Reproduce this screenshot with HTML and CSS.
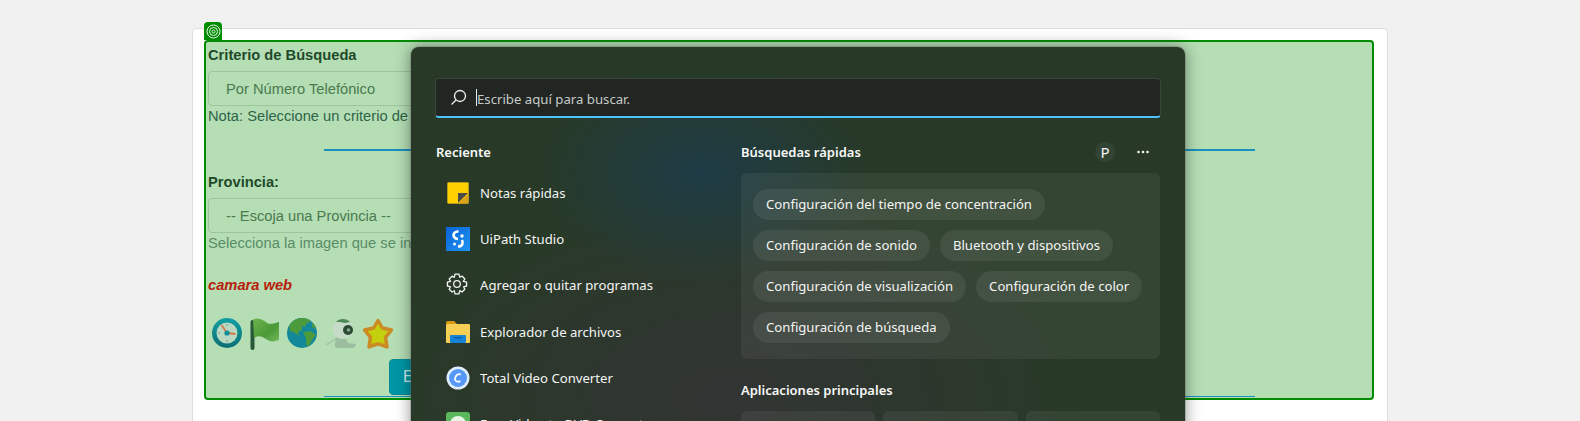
FILE: index.html
```html
<!DOCTYPE html>
<html lang="es">
<head>
    <meta charset="UTF-8">
    <title>Buscar</title>
    <link rel="stylesheet" href="styles.css">
</head>
<body>
    <div class="card">
        <div class="form-box">
            <div class="handle">
                <svg width="15" height="15" viewBox="0 0 15 15" fill="none" stroke="#e8f4e8">
                    <circle cx="7.5" cy="7.5" r="6.5"/>
                    <circle cx="7.5" cy="7.5" r="4"/>
                    <circle cx="7.5" cy="7.5" r="1.5"/>
                </svg>
            </div>
            <label class="label">Criterio de Búsqueda</label>
            <div class="select">Por Número Telefónico</div>
            <p class="note">Nota: Seleccione un criterio de búsqueda</p>
            <hr class="line">
            <label class="label province">Provincia:</label>
            <div class="select">-- Escoja una Provincia --</div>
            <p class="note faded">Selecciona la imagen que se indica</p>
            <p class="captcha">camara web</p>
            <div class="captcha-icons">
                <!-- clock -->
                <svg width="30" height="30" viewBox="0 0 30 30">
                    <defs>
                        <linearGradient id="ring" x1="0" y1="0" x2="0" y2="1">
                            <stop offset="0" stop-color="#12a0a4"/>
                            <stop offset="1" stop-color="#0b6e72"/>
                        </linearGradient>
                    </defs>
                    <circle cx="15" cy="15" r="15" fill="url(#ring)"/>
                    <circle cx="15" cy="15" r="10.5" fill="#b8d8c2"/>
                    <path d="M15 15 L9.5 7" stroke="#d07a48" stroke-width="1.8"/>
                    <path d="M15 15 L23.5 16" stroke="#d07a48" stroke-width="1.8"/>
                    <circle cx="15" cy="15" r="2.6" fill="#0f8f98"/>
                    <circle cx="15" cy="7" r="0.8" fill="#6a9a88"/>
                    <circle cx="15" cy="23" r="0.8" fill="#6a9a88"/>
                    <circle cx="7" cy="15" r="0.8" fill="#6a9a88"/>
                </svg>
                <!-- flag -->
                <svg width="29" height="32" viewBox="0 0 29 32">
                    <defs>
                        <linearGradient id="cloth" x1="0" y1="0" x2="1" y2="1">
                            <stop offset="0" stop-color="#6cb24a"/>
                            <stop offset="0.6" stop-color="#4a9a38"/>
                            <stop offset="1" stop-color="#74b85a"/>
                        </linearGradient>
                    </defs>
                    <rect x="0.5" y="2" width="4" height="30" rx="2" fill="#28573a"/>
                    <path d="M3 1.5 C9 -1 13 2 17 5 C21 7 25 5 29 4 V22 C24 24 20 24 16 21 C12 18 8 17 4 20 Z" fill="url(#cloth)"/>
                </svg>
                <!-- globe -->
                <svg width="30" height="30" viewBox="0 0 30 30">
                    <defs>
                        <clipPath id="earth"><circle cx="15" cy="15" r="15"/></clipPath>
                    </defs>
                    <circle cx="15" cy="15" r="15" fill="#12889a"/>
                    <g clip-path="url(#earth)" fill="#4c9a3e">
                        <path d="M2 8 C5 1 14 -2 22 1 L24 3 L19 6 L18 9 L15 8 L15 12 L11 14 L12 18 L8 15 L3 13 Z"/>
                        <path d="M16 14 L24 13 L29 17 L25 22 L22 28 L19 27 L19 20 Z"/>
                        <path d="M25 5 L29 8 L28 11 L25 9 Z"/>
                    </g>
                </svg>
                <!-- webcam -->
                <svg width="31" height="31" viewBox="0 0 31 31">
                    <path d="M12 20 L1 27" stroke="#a6c8aa" stroke-width="1.6" stroke-linecap="round"/>
                    <path d="M11 20 L21 21 L23 25 L31 26 Q31 30 26 30 H13 Q9 30 10 26 Z" fill="#9cbea0"/>
                    <circle cx="17.5" cy="11" r="10" fill="#c6dcc8"/>
                    <path d="M11 4 C14 0 22 0 25 4 L20 5 L15 4 Z" fill="#4c8a56"/>
                    <circle cx="23" cy="12" r="5" fill="#2a4a32"/>
                    <circle cx="23.5" cy="12" r="1.8" fill="#86ac8e"/>
                </svg>
                <!-- star -->
                <svg width="32" height="32" viewBox="0 0 32 32">
                    <defs>
                        <radialGradient id="starfill" cx="0.5" cy="0.42" r="0.6">
                            <stop offset="0.7" stop-color="#c4cf0e"/>
                            <stop offset="1" stop-color="#d29a1c"/>
                        </radialGradient>
                    </defs>
                    <path d="M16 2.5 L20.4 10 L29.5 12 L23.6 19.4 L25 29 L16 25.8 L7 29 L8.4 19.4 L2.5 12 L11.6 10 Z" fill="url(#starfill)" stroke="#cb8a22" stroke-width="3.4" stroke-linejoin="round"/>
                </svg>
            </div>
            <div class="actions"><button class="submit">Enviar</button></div>
            <hr class="line thin">
        </div>
    </div>

    <div class="search-panel">
        <div class="search-box">
            <svg width="17" height="17" viewBox="0 0 17 17" fill="none" stroke="#f2f2f2" stroke-width="1.3">
                <circle cx="10" cy="7" r="5.5"/>
                <path d="M6 11 L1.5 15.5"/>
            </svg>
            <span class="caret"></span>
            <span class="placeholder">Escribe aquí para buscar.</span>
        </div>
        <div class="columns">
            <div class="recent">
                <h3 class="heading">Reciente</h3>
                <ul class="app-list">
                    <li class="app">
                        <svg width="24" height="24" viewBox="0 0 24 24">
                            <rect x="1.5" y="1.5" width="21" height="21" rx="1" fill="#ffd000" stroke="#b89a20"/>
                            <path d="M12 22 V12 H22 Z" fill="#4a4a46"/>
                            <path d="M13 22 L22 13 V22 Z" fill="#d9a21a"/>
                        </svg>
                        Notas rápidas
                    </li>
                    <li class="app">
                        <svg width="24" height="24" viewBox="0 0 24 24">
                            <defs>
                                <linearGradient id="uipath" x1="0" y1="0" x2="1" y2="1">
                                    <stop offset="0" stop-color="#0a62d8"/>
                                    <stop offset="1" stop-color="#1e96f0"/>
                                </linearGradient>
                            </defs>
                            <rect width="24" height="24" fill="url(#uipath)"/>
                            <path d="M12.5 4.5 C8 4 6.5 8 8.5 10.5 C9.5 11.5 11 12 12 12" fill="none" stroke="#fff" stroke-width="2.6"/>
                            <path d="M16 13 C17.5 16 16.5 19.5 12 19.5" fill="none" stroke="#fff" stroke-width="2.6"/>
                            <circle cx="16" cy="9" r="1.7" fill="#fff"/>
                            <circle cx="8.5" cy="17" r="1.5" fill="#fff"/>
                        </svg>
                        UiPath Studio
                    </li>
                    <li class="app">
                        <svg width="24" height="24" viewBox="0 0 24 24" fill="none" stroke="#f2f2f2" stroke-width="1.3" stroke-linejoin="round">
                            <path d="M9 1.2 H13 L13.7 4.2 L16.2 3.2 L18.9 6 L17.3 8.3 L20.6 9.2 V13 L17.6 13.8 L18.8 16.2 L16 19 L13.7 17.6 L13 20.8 H9 L8.3 17.7 L6 19 L3.2 16.2 L4.5 13.8 L1.4 13 V9.2 L4.6 8.3 L3.2 6 L6 3.2 L8.3 4.3 Z"/>
                            <circle cx="11" cy="11" r="3.3"/>
                        </svg>
                        Agregar o quitar programas
                    </li>
                    <li class="app">
                        <svg width="24" height="22" viewBox="0 0 24 22">
                            <path d="M0 2 Q0 0 2 0 H8 L11 3 H0 Z" fill="#d99a12"/>
                            <rect y="3" width="24" height="19" rx="1" fill="#f7cf55"/>
                            <rect x="4" y="14" width="16" height="8" rx="1" fill="#1583d8"/>
                            <rect x="8" y="16" width="8" height="1.5" fill="#0b5fa8"/>
                        </svg>
                        Explorador de archivos
                    </li>
                    <li class="app">
                        <svg width="24" height="24" viewBox="0 0 24 24">
                            <circle cx="12" cy="12" r="11.5" fill="#dfeeff"/>
                            <circle cx="12" cy="12" r="9" fill="#5598f5"/>
                            <path d="M15 8.5 C12 7 9 10 9 13 C9 15.5 12 16.5 14.5 15" fill="none" stroke="#fff" stroke-width="1.8"/>
                        </svg>
                        Total Video Converter
                    </li>
                    <li class="app">
                        <svg width="24" height="24" viewBox="0 0 24 24">
                            <rect width="24" height="24" rx="3" fill="#5cb85c"/>
                            <circle cx="12" cy="12" r="8" fill="#e8f6e8"/>
                        </svg>
                        Free Video to DVD Converter
                    </li>
                </ul>
            </div>
            <div class="quick">
                <div class="quick-head">
                    <h3 class="heading">Búsquedas rápidas</h3>
                    <span class="avatar">P</span>
                    <svg class="more" width="12" height="4" viewBox="0 0 12 4" fill="#f4f4f4">
                        <circle cx="1.5" cy="2" r="1.3"/>
                        <circle cx="6" cy="2" r="1.3"/>
                        <circle cx="10.5" cy="2" r="1.3"/>
                    </svg>
                </div>
                <div class="chips">
                    <span class="chip">Configuración del tiempo de concentración</span>
                    <span class="chip">Configuración de sonido</span>
                    <span class="chip">Bluetooth y dispositivos</span>
                    <span class="chip">Configuración de visualización</span>
                    <span class="chip">Configuración de color</span>
                    <span class="chip">Configuración de búsqueda</span>
                </div>
                <h3 class="heading top-apps">Aplicaciones principales</h3>
                <div class="tiles">
                    <div class="tile"></div>
                    <div class="tile"></div>
                    <div class="tile"></div>
                </div>
            </div>
        </div>
    </div>
</body>
</html>
```

FILE: styles.css
```css
body {
    margin: 0;
    height: 421px;
    overflow: hidden;
    background: #f1f1f1;
    font-family: "Liberation Sans", Arial, sans-serif;
}

.card {
    margin: 28px 192px 0 192px;
    height: 400px;
    padding: 11px 13px 0 11px;
    box-sizing: border-box;
    background: #fff;
    border: 1px solid #dedede;
    border-radius: 4px;
}

.form-box {
    position: relative;
    height: 360px;
    box-sizing: border-box;
    padding: 4px 2px 0 2px;
    background: #b5deb5;
    border: 2px solid #008c00;
    border-radius: 4px;
    color: #2b5a3a;
}

.handle {
    position: absolute;
    left: -2px;
    top: -20px;
    width: 18px;
    height: 18px;
    display: flex;
    align-items: center;
    justify-content: center;
    background: #008c00;
    border-radius: 4px 4px 0 0;
}

.label {
    display: block;
    font-size: 14.7px;
    line-height: 18px;
    font-weight: bold;
    color: #1f4a2a;
}

.select {
    width: 900px;
    height: 35px;
    margin-top: 7px;
    padding-left: 17px;
    box-sizing: border-box;
    font-size: 14.7px;
    line-height: 35px;
    color: #4a7a4e;
    border: 1px solid #9cc49c;
    border-radius: 4px;
}

.note {
    margin: 1px 0 0 0;
    font-size: 14.7px;
    line-height: 18px;
    color: #2f6448;
}

.note.faded {
    color: #5a8c68;
}

.line {
    width: 931px;
    margin: 24px auto 0 116px;
    height: 2px;
    border: 0;
    background: #1a90c0;
}

.line.thin {
    height: 1px;
    margin-top: 1px;
}

.province {
    margin-top: 22px;
}

.captcha {
    margin: 24px 0 0 0;
    font-size: 14.7px;
    line-height: 18px;
    font-weight: bold;
    font-style: italic;
    color: #b8200c;
}

.captcha-icons {
    display: flex;
    align-items: flex-start;
    gap: 8px;
    margin: 24px 0 0 4px;
    height: 33px;
}

.captcha-icons svg:last-child {
    margin-left: -2px;
}

.actions {
    margin: 8px 0 0 181px;
}

.submit {
    display: block;
    width: 120px;
    height: 36px;
    padding: 0 13px;
    text-align: left;
    font: 16px "Liberation Sans", Arial, sans-serif;
    color: #cfeee8;
    background: #0097a7;
    border: 1px solid #0a8a98;
    border-radius: 4px;
}

/* search flyout, sits over the page */
.search-panel {
    position: absolute;
    left: 411px;
    top: 47px;
    width: 774px;
    height: 420px;
    padding: 31px 25px 0 25px;
    box-sizing: border-box;
    border-radius: 8px 8px 0 0;
    box-shadow: 0 0 0 1px rgba(110, 110, 110, 0.35), 0 0 16px rgba(0, 0, 0, 0.45);
    color: #f4f4f4;
    font-family: "Noto Sans", "Open Sans", sans-serif;
    font-size: 13.15px;
    background:
        radial-gradient(ellipse 170px 110px at 290px 125px, rgba(28, 60, 78, 0.8), rgba(28, 60, 78, 0)),
        radial-gradient(ellipse 360px 210px at 320px 350px, rgba(50, 52, 52, 0.95), rgba(50, 52, 52, 0)),
        #283a27;
}

.search-box {
    display: flex;
    align-items: center;
    height: 40px;
    margin: 0 -1px;
    padding: 0 0 0 14px;
    box-sizing: border-box;
    background: #212623;
    border: 1px solid #39463a;
    border-bottom: 2px solid #4cc2ff;
    border-radius: 4px;
}

.caret {
    width: 1px;
    height: 17px;
    margin-left: 9px;
    background: #e8e8e8;
}

.placeholder {
    padding-top: 3px;
    color: #c8cbc8;
    font-size: 13.2px;
}

.columns {
    display: flex;
    margin-top: 25px;
}

.recent {
    width: 305px;
    flex-shrink: 0;
}

.quick {
    flex: 1;
    margin-top: -1px;
}

.heading {
    margin: 0;
    font-size: 13px;
    line-height: 18px;
    font-weight: 600;
    color: #f8f8f8;
}

.app-list {
    margin: 9px 0 0 0;
    padding: 0;
    list-style: none;
}

.app {
    display: flex;
    align-items: center;
    height: 46.2px;
    padding-left: 10px;
    gap: 10px;
}

.app svg {
    flex-shrink: 0;
}

.quick-head {
    display: flex;
    align-items: center;
    height: 20px;
    padding-right: 11px;
}

.quick-head .heading {
    flex: 1;
}

.avatar {
    width: 20px;
    height: 20px;
    border-radius: 50%;
    background: #334434;
    text-align: center;
    line-height: 20px;
    font-size: 15px;
}

.more {
    margin-left: 22px;
}

.chips {
    display: flex;
    flex-wrap: wrap;
    gap: 10px;
    margin-top: 11px;
    padding: 16px 12px;
    height: 186px;
    box-sizing: border-box;
    align-content: flex-start;
    background: rgba(255, 255, 255, 0.06);
    border-radius: 6px;
}

.chip {
    flex: none;
    height: 31px;
    padding: 0 13px;
    line-height: 30px;
    border-radius: 16px;
    background: rgba(255, 255, 255, 0.07);
}

.top-apps {
    margin-top: 22px;
}

.tiles {
    display: grid;
    grid-template-columns: repeat(3, 1fr);
    gap: 8px;
    margin-top: 12px;
}

.tile {
    height: 60px;
    border-radius: 6px;
    background: rgba(255, 255, 255, 0.06);
}
```
